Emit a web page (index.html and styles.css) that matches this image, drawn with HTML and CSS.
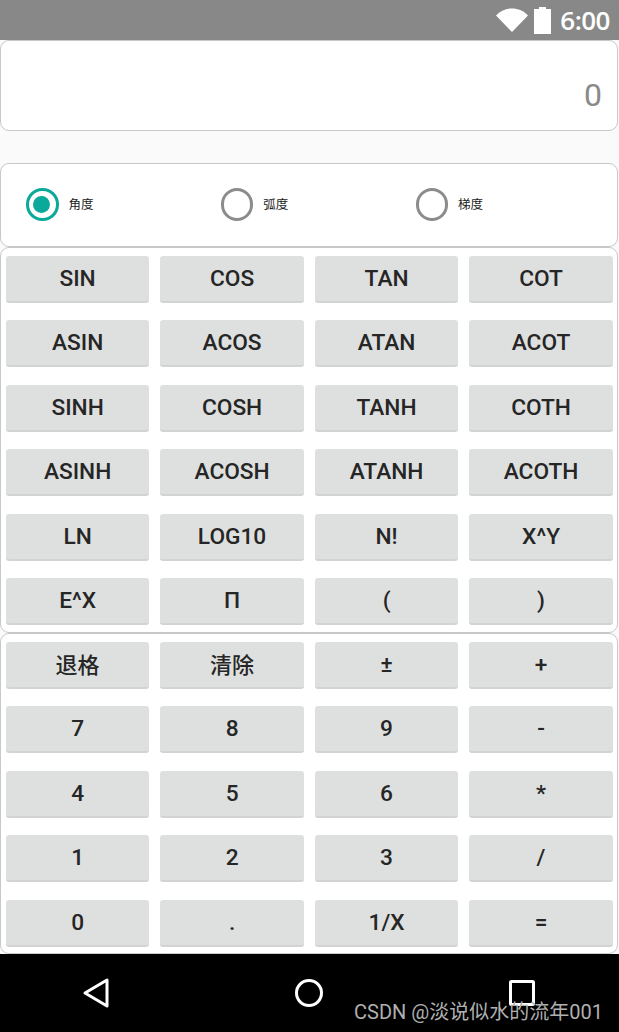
FILE: index.html
```html
<!DOCTYPE html>
<html>

	<head>
		<meta charset="UTF-8">
		<title>计算器</title>
		<link rel="stylesheet" href="styles.css">
	</head>

	<body>
		<div class="status">
			<svg class="wifi" width="32" height="24" viewBox="0 0 32 24"><path d="M0 7.5C4 3 10 .5 16 .5S28 3 32 7.5L16 24z" fill="#fff"/></svg>
			<svg class="battery" width="17" height="27" viewBox="0 0 17 27"><path d="M5 0h7v2h5v25H0V2h5z" fill="#fff"/></svg>
			<span class="clock">6:00</span>
		</div>

		<div class="display"><span>0</span></div>

		<div class="radios">
			<div class="radio"><span class="dot checked"></span><span class="radio_text">角度</span></div>
			<div class="radio"><span class="dot"></span><span class="radio_text">弧度</span></div>
			<div class="radio"><span class="dot"></span><span class="radio_text">梯度</span></div>
		</div>

		<div class="keys keys_fn">
			<button>SIN</button><button>COS</button><button>TAN</button><button>COT</button>
			<button>ASIN</button><button>ACOS</button><button>ATAN</button><button>ACOT</button>
			<button>SINH</button><button>COSH</button><button>TANH</button><button>COTH</button>
			<button>ASINH</button><button>ACOSH</button><button>ATANH</button><button>ACOTH</button>
			<button>LN</button><button>LOG10</button><button>N!</button><button>X^Y</button>
			<button>E^X</button><button>Π</button><button>(</button><button>)</button>
		</div>

		<div class="keys keys_num">
			<button class="key_cn">退格</button><button class="key_cn">清除</button><button>±</button><button>+</button>
			<button>7</button><button>8</button><button>9</button><button>-</button>
			<button>4</button><button>5</button><button>6</button><button>*</button>
			<button>1</button><button>2</button><button>3</button><button>/</button>
			<button>0</button><button>.</button><button>1/X</button><button>=</button>
		</div>

		<div class="nav">
			<svg width="28" height="32" viewBox="0 0 28 32"><path d="M25 3v26L3 16z" fill="none" stroke="#fff" stroke-width="3" stroke-linejoin="round"/></svg>
			<svg width="30" height="30" viewBox="0 0 30 30"><circle cx="15" cy="15" r="12.5" fill="none" stroke="#fff" stroke-width="3"/></svg>
			<svg width="28" height="28" viewBox="0 0 28 28"><rect x="2.5" y="2.5" width="23" height="23" rx="1" fill="none" stroke="#fff" stroke-width="3"/></svg>
			<span class="mark">CSDN @淡说似水的流年001</span>
		</div>
	</body>

</html>
```

FILE: styles.css
```css
* {
	margin: 0px;
	padding: 0px;
	box-sizing: border-box;
}
body {
	width: 619px;
	height: 1032px;
	overflow: hidden;
	background: #fafafa;
	font-family: Roboto, "Noto Sans CJK SC", sans-serif;
}
.status {
	height: 40px;
	background: #888888;
	display: flex;
	align-items: center;
	justify-content: flex-end;
	padding-right: 9px;
}
.wifi {
	margin-right: 6px;
}
.battery {
	margin-right: 9px;
}
.clock {
	color: #fff;
	font-family: "Open Sans", sans-serif;
	font-size: 26px;
	font-weight: 600;
	letter-spacing: -0.5px;
}
.display {
	width: 618px;
	height: 91px;
	background: #fff;
	border: 1px solid #c8c8c8;
	border-radius: 9px;
	display: flex;
	align-items: flex-end;
	justify-content: flex-end;
	padding: 0 15px 16px 0;
	margin-bottom: 32px;
	color: #8a8a8a;
	font-size: 32px;
	line-height: 38px;
}
.radios {
	width: 618px;
	height: 84px;
	background: #fff;
	border: 1px solid #c8c8c8;
	border-radius: 9px;
	display: flex;
	align-items: center;
	padding: 0 0 1px 25px;
}
.radio {
	width: 194.8px;
	display: flex;
	align-items: center;
}
.dot {
	width: 32.5px;
	height: 32.5px;
	border: 3.5px solid #8c8c8c;
	border-radius: 50%;
	margin-right: 10px;
	position: relative;
}
.dot.checked {
	border-color: #0aa99a;
}
.dot.checked::after {
	content: "";
	position: absolute;
	top: 4.25px;
	left: 4.25px;
	width: 17px;
	height: 17px;
	border-radius: 50%;
	background: #0aa99a;
}
.radio_text {
	font-size: 12.5px;
	color: #1c1c1c;
	margin-bottom: 2px;
}
.keys {
	width: 618px;
	background: #fff;
	border: 1px solid #c8c8c8;
	border-radius: 9px;
	display: grid;
	grid-template-columns: repeat(4, 143.2px);
	column-gap: 11.3px;
	row-gap: 17.4px;
	grid-auto-rows: 47px;
	padding: 8px 0 0 5px;
}
.keys_fn {
	height: 386px;
}
.keys_num {
	height: 321px;
}
.keys button {
	border: 0;
	border-bottom: 2px solid #d2d4d3;
	border-radius: 3px;
	background: #dee0df;
	color: #262626;
	font-family: Roboto, "Noto Sans CJK SC", sans-serif;
	font-size: 22.7px;
	font-weight: 500;
}
.keys .key_cn {
	font-size: 22px;
	padding-bottom: 3px;
}
.nav {
	height: 78px;
	background: #000;
	position: relative;
	display: grid;
	grid-template-columns: 192px 234px 191px;
	justify-items: center;
	align-items: center;
}
.mark {
	position: absolute;
	right: 16px;
	bottom: 7px;
	color: #b0b0b0;
	font-size: 20px;
	font-family: Roboto, "Noto Sans CJK SC", sans-serif;
}
```
